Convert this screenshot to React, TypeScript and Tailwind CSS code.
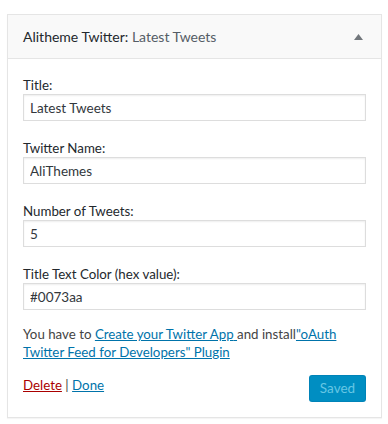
import React, { FC } from 'react';

const Field: FC<{ label: string; value: string }> = ({ label, value }) => (
  <div className="flex flex-col">
    <label className="leading-[18px] text-[#23282d]">{label}</label>
    <input
      readOnly
      value={value}
      className="h-[27px] w-full border border-[#ddd] bg-white pl-[6px] text-[13.5px] text-[#32373c] shadow-[inset_0_1px_2px_rgba(0,0,0,0.07)] outline-none"
    />
  </div>
);

const App: FC = () => {
  return (
    <div
      className="min-h-screen bg-white px-[7px] pt-[14px] text-[13.3px] text-[#444]"
      style={{ fontFamily: 'Lato, "Noto Sans", sans-serif' }}
    >
      <div className="w-[375px] border border-[#e5e5e5] bg-white shadow-[0_1px_1px_rgba(0,0,0,0.04)]">
        <header className="flex h-[44px] items-center justify-between border-b border-[#e5e5e5] bg-[#f9f9f9] pl-[15px] pr-[18px]">
          <h3 className="text-[14px] text-[#23282d]">
            Alitheme Twitter:<span className="text-[#555d66]"> Latest Tweets</span>
          </h3>
          <svg width="9" height="6" viewBox="0 0 9 6" className="mt-[1px]">
            <path d="M4.5 0 L9 6 L0 6 Z" fill="#72777c" />
          </svg>
        </header>
        <div className="flex flex-col gap-[18px] px-[15px] pt-[17px]">
          <Field label="Title:" value="Latest Tweets" />
          <Field label="Twitter Name:" value="AliThemes" />
          <Field label="Number of Tweets:" value="5" />
          <Field label="Title Text Color (hex value):" value="#0073aa" />
        </div>
        <p className="mt-[15px] px-[15px] leading-[18px]">
          You have to{' '}
          <a href="#" className="text-[#0073aa] underline">
            Create your Twitter App{' '}
          </a>
          and install
          <a href="#" className="text-[#0073aa] underline">
            "oAuth Twitter Feed for Developers" Plugin
          </a>
        </p>
        <div className="mt-[14px] flex items-start justify-between px-[15px] pb-[15px]">
          <div className="pt-[1px] leading-[18px]">
            <a href="#" className="text-[#a00] underline">
              Delete
            </a>{' '}
            |{' '}
            <a href="#" className="text-[#0073aa] underline">
              Done
            </a>
          </div>
          <button
            disabled
            className="h-[27px] w-[57px] rounded-[3px] border border-[#0073aa]/40 bg-[#008ec2] text-[13.5px] text-[#66c6e4]"
          >
            Saved
          </button>
        </div>
      </div>
    </div>
  );
};

export default App;
